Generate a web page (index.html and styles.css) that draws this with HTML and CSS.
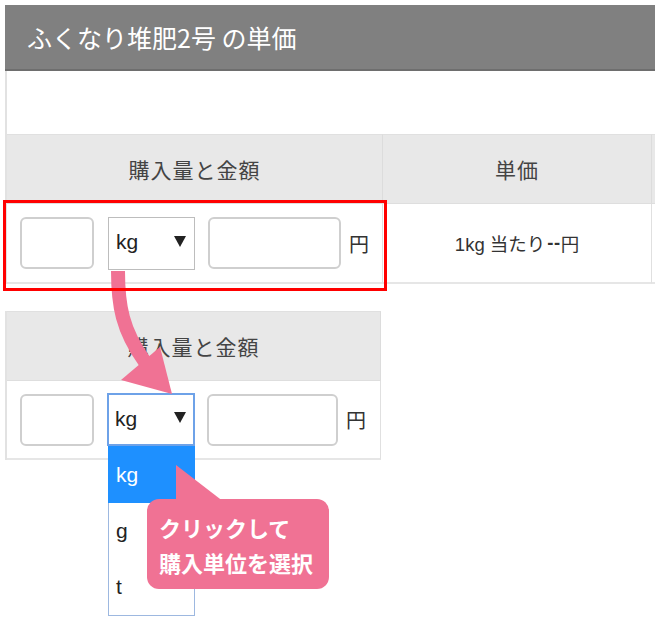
FILE: index.html
```html
<!DOCTYPE html>
<html lang="ja">
<head>
<meta charset="utf-8">
<title>ふくなり堆肥2号 の単価</title>
<link rel="stylesheet" href="styles.css">
</head>
<body>
<div class="page">
  <div class="panel">
    <div class="title">ふくなり堆肥2号 の単価</div>
    <div class="spacer"></div>
    <div class="table wide">
      <div class="th c1">購入量と金額</div>
      <div class="th c2">単価</div>
      <div class="th c3"></div>
      <div class="td c1">
        <div class="field qty"></div>
        <div class="select"><span>kg</span><svg class="caret" viewBox="0 0 12 11" width="12" height="11"><polygon points="0,0 12,0 6,11" fill="#222"/></svg></div>
        <div class="field price"></div>
        <span class="yen">円</span>
      </div>
      <div class="td c2 unit">1kg 当たり <b>--</b>円</div>
      <div class="td c3"></div>
    </div>
    <div class="table narrow">
      <div class="th c1">購入量と金額</div>
      <div class="td c1 tight">
        <div class="field qty"></div>
        <div class="select focused"><span>kg</span><svg class="caret" viewBox="0 0 12 11" width="12" height="11"><polygon points="0,0 12,0 6,11" fill="#222"/></svg></div>
        <div class="field price"></div>
        <span class="yen">円</span>
      </div>
    </div>
  </div>

  <div class="highlight"></div>

  <ul class="options">
    <li class="active">kg</li>
    <li>g</li>
    <li>t</li>
  </ul>

  <svg class="arrows" viewBox="0 0 660 626" width="660" height="626">
    <path d="M118 271 C118 305 122 330 145 362" fill="none" stroke="#f07294" stroke-width="14"/>
    <polygon points="121,380 172,394 160,347" fill="#f07294"/>
    <polygon points="176,465 176,502 224,502" fill="#f07294"/>
  </svg>

  <div class="callout">クリックして<br>購入単位を選択</div>
</div>
</body>
</html>
```

FILE: styles.css
```css
html, body {
  margin: 0;
  padding: 0;
  background: #fff;
}

body {
  font-family: "Liberation Sans", "Noto Sans CJK JP", sans-serif;
  color: #333;
}

.page {
  position: relative;
  width: 660px;
  height: 626px;
  padding: 5px 0 0 5px;
  box-sizing: border-box;
  overflow: hidden;
}

.panel {
  width: 650px;
  overflow: hidden;
}

.title {
  height: 63px;
  background: #808080;
  border-bottom: 2px solid #6e6e6e;
  color: #fff;
  font-family: "Noto Sans CJK JP", sans-serif;
  font-size: 25px;
  display: flex;
  align-items: center;
  padding-left: 22px;
  padding-bottom: 1px;
  box-sizing: content-box;
}

.spacer {
  height: 63px;
  border-left: 2px solid #e2e2e2;
  box-sizing: border-box;
}

.table {
  display: grid;
  border-left: 2px solid #e2e2e2;
}

.table.wide {
  width: 760px;
  grid-template-columns: 376px 269px 1fr;
}

.table.narrow {
  width: 376px;
  grid-template-columns: 374px;
  margin-top: 27px;
}

.th {
  height: 70px;
  box-sizing: border-box;
  background: #e8e8e8;
  border-top: 1px solid #e0e0e0;
  border-bottom: 1px solid #dedede;
  border-right: 1px solid #dcdcdc;
  display: flex;
  align-items: center;
  justify-content: center;
  font-family: "Noto Sans CJK JP", sans-serif;
  font-size: 21px;
  letter-spacing: 1px;
  color: #444;
  padding-bottom: 1px;
}

.td {
  height: 80px;
  box-sizing: border-box;
  background: #fff;
  border-bottom: 2px solid #e6e6e6;
  border-right: 1px solid #e0e0e0;
  display: flex;
  align-items: center;
}

.narrow .td {
  height: 79px;
}

.td.c1 {
  padding-left: 13px;
}

.field {
  height: 52px;
  box-sizing: border-box;
  border: 2px solid #cfcfcf;
  border-radius: 6px;
  background: #fff;
}

.field.qty {
  width: 74px;
}

.field.price {
  width: 133px;
  margin-left: 13px;
}

.select {
  width: 87px;
  height: 53px;
  box-sizing: border-box;
  margin-left: 14px;
  border: 1px solid #bdbdbd;
  background: #fff;
  display: flex;
  align-items: center;
  justify-content: space-between;
  padding: 0 8px 2px 7px;
  font-size: 21px;
  color: #222;
}

.select.focused {
  border: 2px solid #6ea2e8;
  padding-left: 6px;
  padding-right: 7px;
}

.caret {
  display: block;
  margin-top: -2px;
}

.tight .select {
  margin-left: 13px;
  width: 88px;
}

.tight .field.price {
  width: 131px;
  margin-left: 12px;
}

.yen {
  margin-left: 8px;
  font-family: "Noto Sans CJK JP", sans-serif;
  font-size: 20px;
  color: #333;
}

.unit {
  justify-content: center;
  font-size: 18.5px;
  color: #333;
  padding-bottom: 1px;
}

.unit b {
  font-weight: 700;
  margin-left: 2px;
  letter-spacing: 0.5px;
}

.highlight {
  position: absolute;
  left: 3px;
  top: 200px;
  width: 384px;
  height: 91px;
  box-sizing: border-box;
  border: 3px solid #ff0000;
  z-index: 3;
}

.options {
  position: absolute;
  left: 108px;
  top: 446px;
  width: 87px;
  height: 170px;
  box-sizing: border-box;
  margin: 0;
  padding: 0;
  list-style: none;
  background: #fff;
  border: 1px solid #9db8e0;
  border-top: none;
  z-index: 1;
}

.options li {
  height: 56px;
  display: flex;
  align-items: center;
  padding-left: 7px;
  font-size: 21px;
  color: #222;
}

.options li.active {
  height: 57px;
  background: #1e90ff;
  color: #fff;
  margin: 0 -1px;
  padding-left: 8px;
}

.arrows {
  position: absolute;
  left: 0;
  top: 0;
  z-index: 2;
  pointer-events: none;
}

.callout {
  position: absolute;
  left: 147px;
  top: 499px;
  width: 182px;
  height: 90px;
  box-sizing: border-box;
  padding: 11px 0 0 12px;
  background: #f07294;
  border-radius: 12px;
  color: #fff;
  font-family: "Noto Sans CJK JP", sans-serif;
  font-weight: 700;
  font-size: 22px;
  line-height: 35px;
  z-index: 2;
}
```
